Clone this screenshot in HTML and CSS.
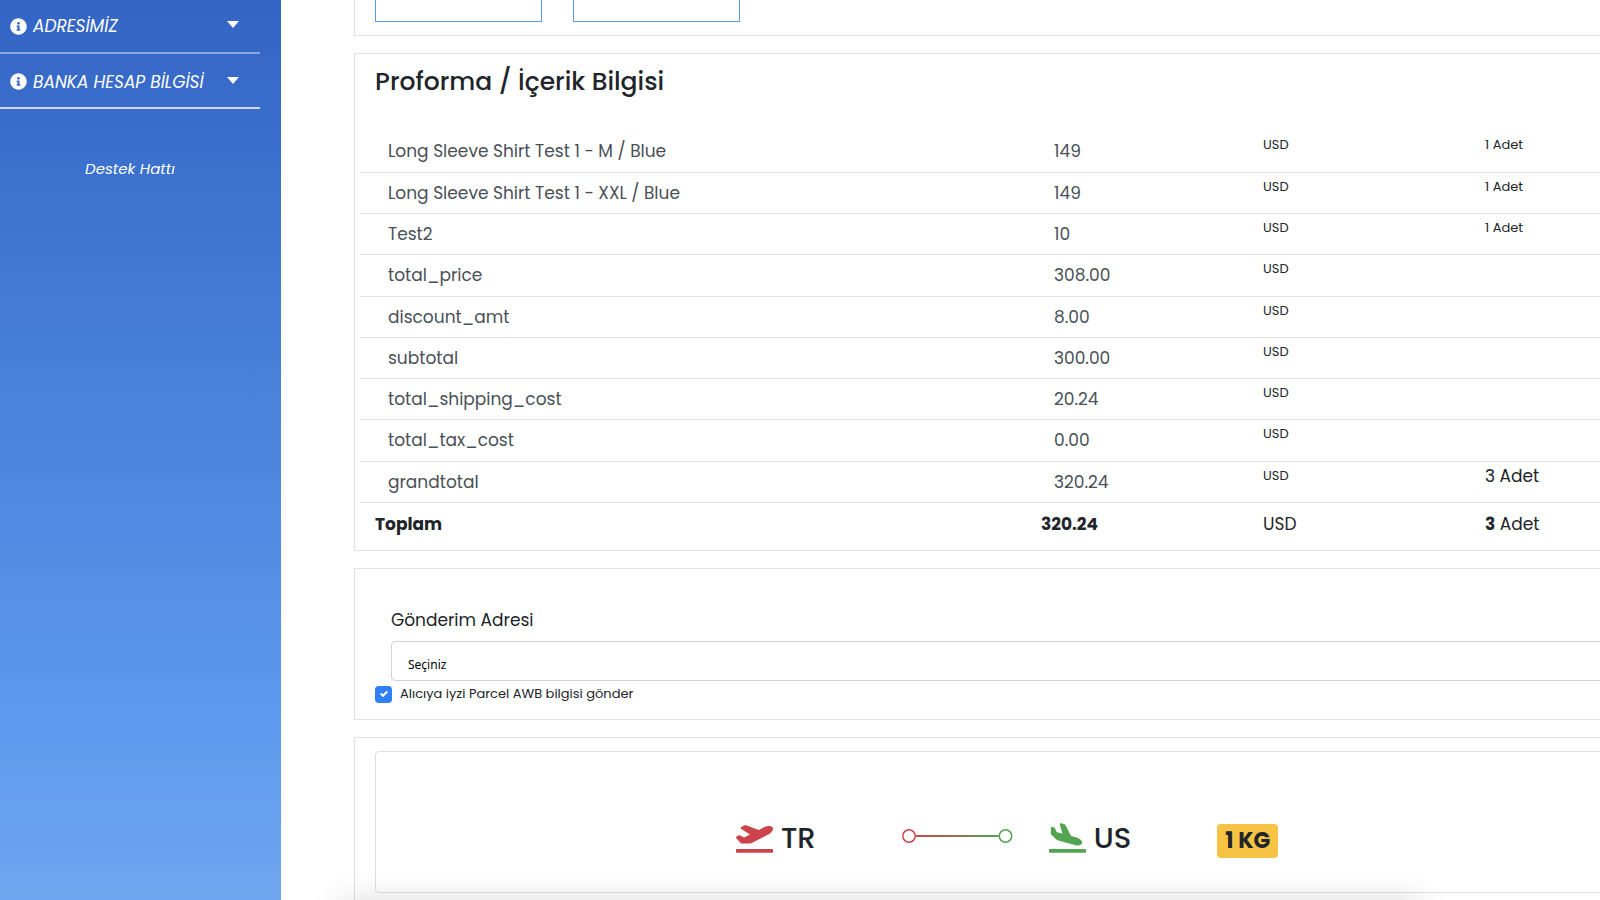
FILE: index.html
```html
<!DOCTYPE html>
<html lang="tr">
<head>
<meta charset="utf-8">
<title>Proforma</title>
<link rel="stylesheet" href="styles.css">
</head>
<body>
<svg class="defs" aria-hidden="true">
  <symbol id="info" viewBox="0 0 512 512"><path fill="currentColor" d="M256 8C119.043 8 8 119.083 8 256c0 136.997 111.043 248 248 248s248-111.003 248-248C504 119.083 392.957 8 256 8zm0 110c23.196 0 42 18.804 42 42s-18.804 42-42 42-42-18.804-42-42 18.804-42 42-42zm56 254c0 6.627-5.373 12-12 12h-88c-6.627 0-12-5.373-12-12v-24c0-6.627 5.373-12 12-12h12v-64h-12c-6.627 0-12-5.373-12-12v-24c0-6.627 5.373-12 12-12h64c6.627 0 12 5.373 12 12v100h12c6.627 0 12 5.373 12 12v24z"/></symbol>
</svg>
<div class="layout">
  <aside class="sidebar">
    <nav class="menu">
      <button class="menu-item" type="button"><svg class="info"><use href="#info"/></svg><span>ADRESİMİZ</span><i class="caret"></i></button>
      <button class="menu-item" type="button"><svg class="info"><use href="#info"/></svg><span>BANKA HESAP BİLGİSİ</span><i class="caret"></i></button>
    </nav>
    <a class="support" href="#">Destek Hattı</a>
  </aside>
  <main class="main">
    <section class="card options">
      <div class="option"></div>
      <div class="option"></div>
    </section>

    <section class="card proforma">
      <h2 class="title">Proforma / İçerik Bilgisi</h2>
      <table class="items">
        <colgroup><col class="col-name"><col class="col-side"><col class="col-side"><col class="col-side"></colgroup>
        <tbody>
          <tr><td>Long Sleeve Shirt Test 1 - M / Blue</td><td>149</td><td class="small">USD</td><td class="small">1 Adet</td></tr>
          <tr><td>Long Sleeve Shirt Test 1 - XXL / Blue</td><td>149</td><td class="small">USD</td><td class="small">1 Adet</td></tr>
          <tr><td>Test2</td><td>10</td><td class="small">USD</td><td class="small">1 Adet</td></tr>
          <tr><td>total_price</td><td>308.00</td><td class="small">USD</td><td></td></tr>
          <tr><td>discount_amt</td><td>8.00</td><td class="small">USD</td><td></td></tr>
          <tr><td>subtotal</td><td>300.00</td><td class="small">USD</td><td></td></tr>
          <tr><td>total_shipping_cost</td><td>20.24</td><td class="small">USD</td><td></td></tr>
          <tr><td>total_tax_cost</td><td>0.00</td><td class="small">USD</td><td></td></tr>
          <tr><td>grandtotal</td><td>320.24</td><td class="small">USD</td><td class="count">3 Adet</td></tr>
        </tbody>
        <tfoot>
          <tr><th scope="row">Toplam</th><td><b>320.24</b></td><td>USD</td><td><b>3</b> Adet</td></tr>
        </tfoot>
      </table>
    </section>

    <section class="card address">
      <div class="field">
        <label for="address">Gönderim Adresi</label>
        <select id="address" class="select"><option>Seçiniz</option></select>
      </div>
      <label class="check"><input type="checkbox" checked>Alıcıya iyzi Parcel AWB bilgisi gönder</label>
    </section>

    <section class="card shipment">
      <div class="route">
        <div class="place">
          <svg class="plane from" viewBox="0 0 640 512"><path fill="currentColor" d="M624 448H16c-8.84 0-16 7.16-16 16v32c0 8.84 7.16 16 16 16h608c8.84 0 16-7.16 16-16v-32c0-8.84-7.16-16-16-16zM80.55 341.27c6.28 6.84 15.1 10.72 24.33 10.71l130.54-.18a65.62 65.62 0 0 0 29.64-7.12l290.96-147.65c26.74-13.57 50.71-32.94 67.02-58.31 18.31-28.48 20.3-49.09 13.07-63.65-7.21-14.57-24.74-25.27-58.25-27.45-29.85-1.94-59.54 5.92-86.28 19.48l-98.51 49.99-218.7-82.06a17.799 17.799 0 0 0-18-1.11L90.62 67.29c-10.67 5.41-13.25 19.65-5.17 28.53l156.22 98.1-103.21 52.38-72.35-36.47a17.804 17.804 0 0 0-16.07.02L9.91 230.22c-10.44 5.3-13.19 19.12-5.57 28.08l76.21 82.97z"/></svg>
          <span>TR</span>
        </div>
        <svg class="path" viewBox="0 0 111 16">
          <defs><linearGradient id="leg" gradientUnits="userSpaceOnUse" x1="14" y1="0" x2="97" y2="0"><stop offset="0" stop-color="#cc444b"/><stop offset="1" stop-color="#53a451"/></linearGradient></defs>
          <rect x="14" y="7" width="83" height="2" fill="url(#leg)"/>
          <circle cx="7" cy="8" r="6.2" fill="#fff" stroke="#cc444b" stroke-width="1.5"/>
          <circle cx="103.5" cy="8" r="6.2" fill="#fff" stroke="#53a451" stroke-width="1.5"/>
        </svg>
        <div class="place">
          <svg class="plane to" viewBox="0 0 640 512"><path fill="currentColor" d="M624 448H16c-8.84 0-16 7.16-16 16v32c0 8.84 7.16 16 16 16h608c8.84 0 16-7.16 16-16v-32c0-8.84-7.16-16-16-16zM44.81 205.66l88.74 80a62.607 62.607 0 0 0 25.47 13.93l287.6 78.35c26.48 7.21 54.56 8.72 81 1.36 29.67-8.27 43.44-21.21 47.25-35.71 3.83-14.5-1.73-32.71-23.37-54.96-19.28-19.82-44.35-32.79-70.83-40l-97.51-26.56L282.8 30.22c-1.51-5.81-5.95-10.35-11.66-11.91L206.05.58c-10.56-2.88-20.9 5.32-20.71 16.44l47.92 164.21-102.2-27.84-27.59-67.88c-1.93-4.89-6.01-8.57-11.02-9.93L52.72 64.75c-10.34-2.82-20.53 5-20.72 15.88l.23 101.78c.19 8.91 6.03 17.34 12.58 23.25z"/></svg>
          <span>US</span>
        </div>
        <span class="badge">1 KG</span>
      </div>
    </section>
  </main>
</div>
<div class="dock-shadow"></div>
</body>
</html>
```
FILE: styles.css
```css
* { box-sizing: border-box; }

body {
  margin: 0;
  height: 100vh;
  overflow: hidden;
  background: #fff;
  color: #212529;
  font: 17px/24px Poppins, Inter, sans-serif;
}

.defs { display: none; }

.layout { display: flex; min-height: 100vh; }

.sidebar {
  flex: 0 0 281px;
  background: linear-gradient(#3464c4 0, #3e73d0 200px, #5690e7 600px, #5b99ed 700px, #70a5f0 900px);
  color: #fff;
  font-style: italic;
}

.menu { width: 260px; }

.menu-item {
  display: flex;
  align-items: center;
  gap: 6px;
  width: 100%;
  height: 55px;
  padding: 2px 21px 0 10px;
  border: 0;
  border-bottom: 2px solid #8fa9df;
  background: none;
  color: inherit;
  font: inherit;
  white-space: nowrap;
}

.menu-item:first-child { height: 54px; padding-top: 0; }
.menu-item:last-child { border-bottom-color: #cdd6ea; }

.info { width: 17px; height: 17px; flex: none; }

.caret {
  margin: 0 0 3px auto;
  border: 6px solid transparent;
  border-top: 7px solid #fff;
  border-bottom: 0;
}

.support {
  display: block;
  margin-top: 48px;
  width: 260px;
  color: inherit;
  font-size: 15px;
  text-align: center;
  text-decoration: none;
}

.main {
  flex: 1;
  min-width: 0;
  padding-left: 73px;
}

.card {
  margin: 0 -98px 17px 0;
  border: 1px solid #e0e1e6;
}

.options {
  display: flex;
  gap: 31px;
  padding: 0 20px 13px;
  border-top: 0;
}

.option {
  width: 167px;
  height: 22px;
  border: 1px solid #5b98f5;
  border-top: 0;
}

.proforma { padding: 10px 5px 7px; }

.title {
  margin: 0 15px 31px;
  font-size: 25px;
  line-height: 36px;
  font-weight: 500;
}

.items {
  width: 100%;
  table-layout: fixed;
  border-collapse: collapse;
}

.col-name { width: 50%; }

.items tbody td {
  height: 41px;
  padding: 0 15px 0 28px;
  border-bottom: 1px solid #e0e3e7;
  color: #495057;
}

.items tbody tr:nth-child(4n) td { height: 42px; }

.items tbody .small,
.items tbody .count {
  padding: 0 15px 12px;
  color: #212529;
}

.items .small { font-size: 13px; }

.items tfoot th,
.items tfoot td {
  height: 41px;
  padding: 2px 15px 0;
  text-align: left;
}

.address { padding: 39px 20px 13px; }

.field {
  display: flex;
  flex-direction: column;
  gap: 9px;
  padding-left: 16px;
}

.select {
  height: 40px;
  padding: 6px 16px 0;
  appearance: none;
  border: 1px solid #ced4da;
  border-radius: 4px;
  background: #fff;
  color: #000;
  font: 12px "Noto Sans", sans-serif;
}

.check {
  display: flex;
  align-items: center;
  gap: 8px;
  margin-top: 1px;
  font-size: 13px;
}

.check input {
  width: 17px;
  height: 17px;
  margin: 0;
  appearance: none;
  border-radius: 4px;
  background: #2f7ff7 url("data:image/svg+xml,%3Csvg xmlns='http://www.w3.org/2000/svg' viewBox='0 0 8 8'%3E%3Cpath fill='%23fff' d='M6.564.75l-3.59 3.612-1.538-1.55L0 4.26 2.974 7.25 8 2.193z'/%3E%3C/svg%3E") center / 8px 8px no-repeat;
}

.shipment { padding: 13px 20px 24px; }

.route {
  display: flex;
  align-items: center;
  height: 142px;
  padding: 32px 0 0 360px;
  border: 1px solid #dcdddf;
  border-radius: 4px;
}

.place {
  display: flex;
  align-items: center;
  gap: 8px;
  font-size: 29px;
  line-height: 36px;
  font-weight: 500;
}

.plane { width: 37px; height: 30px; }
.from { color: #cc444b; }
.to { color: #53a451; }

.path { width: 111px; height: 16px; margin: 0 36px 4px 86px; }

.badge {
  margin: 5px 0 0 86px;
  padding: 0 8px;
  border-radius: 4px;
  background: #f6c344;
  font-size: 22px;
  line-height: 34px;
  font-weight: 700;
}

/* Shadow cast by the floating bar below the fold */
.dock-shadow {
  position: fixed;
  top: 100%;
  left: 340px;
  right: 180px;
  height: 80px;
  box-shadow: 0 0 32px rgba(0, 0, 0, .14);
}
```
